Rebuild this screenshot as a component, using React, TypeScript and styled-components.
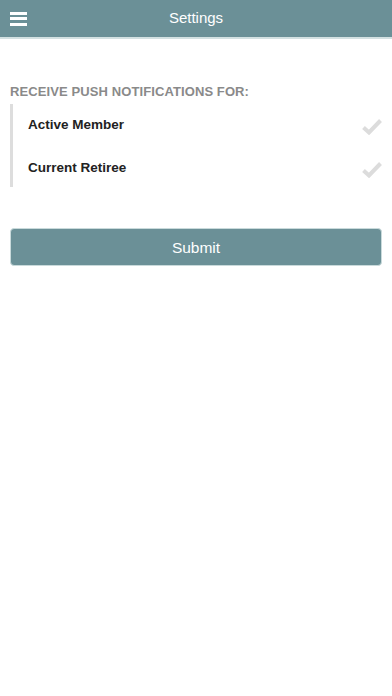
import React from "react";
import styled, { createGlobalStyle } from "styled-components";

const Global = createGlobalStyle`
  html, body { margin: 0; padding: 0; background: #fff; }
  body { font-family: "Liberation Sans", Arial, sans-serif; }
`;

const Page = styled.div`
  width: 392px;
  min-height: 696px;
  background: #fff;
`;

const Header = styled.header`
  height: 37px;
  background: #6b9097;
  border-bottom: 2px solid #d3e1e2;
  display: grid;
  grid-template-columns: 50px 1fr 50px;
  align-items: center;
`;

const MenuButton = styled.div`
  padding-left: 10px;
  display: flex;
  flex-direction: column;
  gap: 2.5px;
  span {
    display: block;
    width: 17px;
    height: 3px;
    background: #fff;
  }
`;

const Title = styled.h1`
  margin: 0;
  text-align: center;
  color: #fff;
  font-size: 15px;
  font-weight: normal;
  padding-bottom: 2px;
`;

const Content = styled.main`
  padding: 45px 10px 0;
`;

const SectionLabel = styled.div`
  color: #8a8a8a;
  font-size: 13px;
  font-weight: bold;
  letter-spacing: 0.1px;
  margin-bottom: 5px;
`;

const OptionList = styled.div`
  border-left: 3px solid #dddddd;
  padding: 10px 0 10px 15px;
  display: flex;
  flex-direction: column;
  gap: 23px;
`;

const Option = styled.div`
  display: flex;
  align-items: center;
  justify-content: space-between;
  height: 20px;
`;

const OptionText = styled.span`
  font-size: 13.5px;
  font-weight: bold;
  color: #222;
`;

const Check = styled.svg`
  width: 20px;
  height: 17px;
  margin-top: 4px;
`;

const SubmitButton = styled.button`
  margin-top: 41px;
  width: 100%;
  height: 38px;
  background: #6b9097;
  border: 1px solid #c9dadb;
  border-radius: 4px;
  color: #fff;
  font-family: "Liberation Sans", Arial, sans-serif;
  font-size: 15.5px;
  padding-top: 2px;
  cursor: pointer;
`;

const CheckIcon = () => (
  <Check viewBox="0 0 20 17">
    <path d="M1.5 9.5 L7 14.5 L18.5 2.5" fill="none" stroke="#dcdcdc" strokeWidth="4" strokeLinejoin="miter" />
  </Check>
);

export default function App() {
  return (
    <Page>
      <Global />
      <Header>
        <MenuButton>
          <span />
          <span />
          <span />
        </MenuButton>
        <Title>Settings</Title>
        <div />
      </Header>
      <Content>
        <SectionLabel>RECEIVE PUSH NOTIFICATIONS FOR:</SectionLabel>
        <OptionList>
          <Option>
            <OptionText>Active Member</OptionText>
            <CheckIcon />
          </Option>
          <Option>
            <OptionText>Current Retiree</OptionText>
            <CheckIcon />
          </Option>
        </OptionList>
        <SubmitButton>Submit</SubmitButton>
      </Content>
    </Page>
  );
}
